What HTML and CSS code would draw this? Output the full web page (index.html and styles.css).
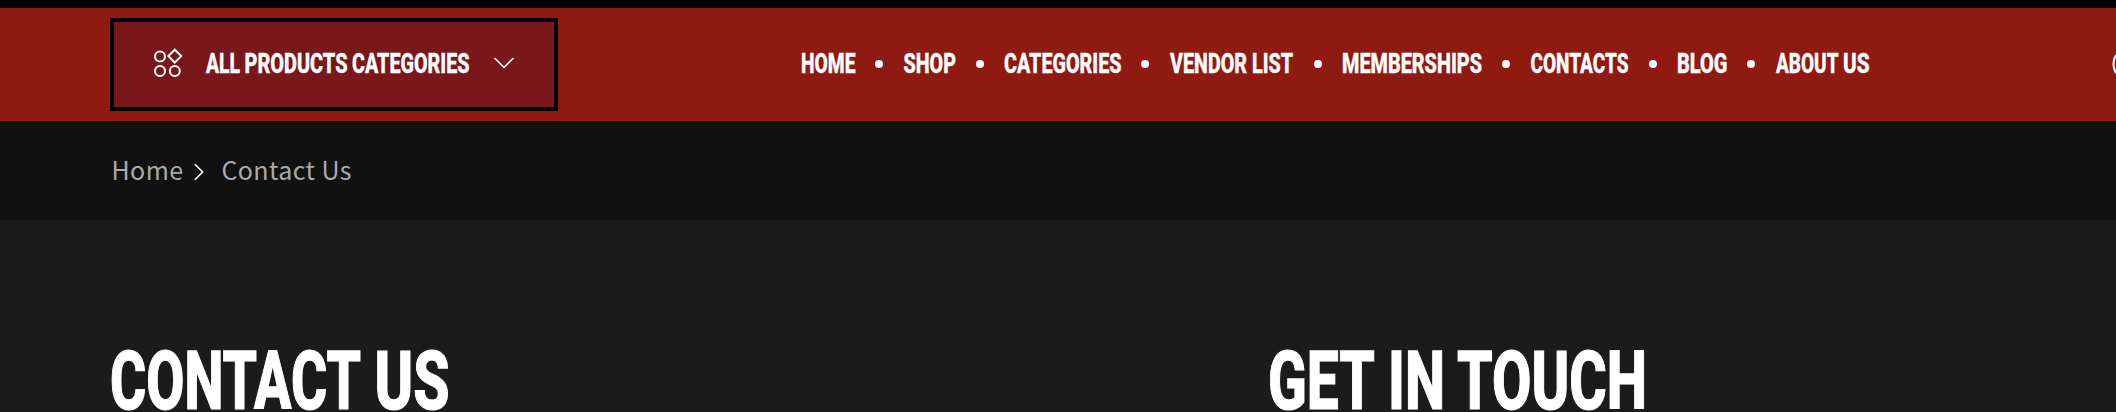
FILE: index.html
```
<!DOCTYPE html>
<html lang="en">
<head>
  <meta charset="UTF-8" />
  <meta name="viewport" content="width=device-width, initial-scale=1.0" />
  <title>Contact Us</title>
  <link rel="stylesheet" href="styles.css">
</head>
<body>
  <header class="navbar">
    <button class="categories-btn" type="button">
      <svg class="grid-icon" width="30" height="30" viewBox="0 0 30 30">
        <circle cx="7" cy="8.5" r="5" />
        <path d="M21.8 1.7l6.4 6.4-6.4 6.4-6.4-6.4z" />
        <circle cx="7" cy="23" r="5" />
        <circle cx="21.8" cy="23" r="5" />
      </svg>
      <svg class="label" width="264" height="36">
        <text x="0" y="28" textLength="34" lengthAdjust="spacingAndGlyphs">ALL</text>
        <text x="38.5" y="28" textLength="103" lengthAdjust="spacingAndGlyphs">PRODUCTS</text>
        <text x="146" y="28" textLength="117.5" lengthAdjust="spacingAndGlyphs">CATEGORIES</text>
      </svg>
      <svg class="chevron" width="22" height="12" viewBox="0 0 22 12"><path d="M1.5 1l9.5 9.3L20.5 1" /></svg>
    </button>
    <nav class="menu">
      <a href="#"><svg class="label" width="52.5" height="36"><text x="-1" y="28" textLength="54.5" lengthAdjust="spacingAndGlyphs">HOME</text></svg></a>
      <i class="dot"></i>
      <a href="#"><svg class="label" width="51" height="36"><text x="-.5" y="28" textLength="52.5" lengthAdjust="spacingAndGlyphs">SHOP</text></svg></a>
      <i class="dot"></i>
      <a href="#"><svg class="label" width="115" height="36"><text x="-1" y="28" textLength="117.5" lengthAdjust="spacingAndGlyphs">CATEGORIES</text></svg></a>
      <i class="dot"></i>
      <a href="#"><svg class="label" width="122.7" height="36"><text x="0" y="28" textLength="77" lengthAdjust="spacingAndGlyphs">VENDOR</text><text x="82" y="28" textLength="41" lengthAdjust="spacingAndGlyphs">LIST</text></svg></a>
      <i class="dot"></i>
      <a href="#"><svg class="label" width="138.3" height="36"><text x="-1" y="28" textLength="140" lengthAdjust="spacingAndGlyphs">MEMBERSHIPS</text></svg></a>
      <i class="dot"></i>
      <a href="#"><svg class="label" width="97" height="36"><text x="-.5" y="28" textLength="98" lengthAdjust="spacingAndGlyphs">CONTACTS</text></svg></a>
      <i class="dot"></i>
      <a href="#"><svg class="label" width="48" height="36"><text x="-1" y="28" textLength="50.5" lengthAdjust="spacingAndGlyphs">BLOG</text></svg></a>
      <i class="dot"></i>
      <a href="#"><svg class="label" width="95" height="36"><text x="0" y="28" textLength="62.5" lengthAdjust="spacingAndGlyphs">ABOUT</text><text x="67" y="28" textLength="26.5" lengthAdjust="spacingAndGlyphs">US</text></svg></a>
    </nav>
    <svg class="account" width="4" height="34" viewBox="0 0 4 34"><circle cx="17.5" cy="17" r="16" /></svg>
  </header>

  <div class="breadcrumb">
    <a href="#">Home</a>
    <svg class="arrow" width="10" height="18" viewBox="0 0 10 18"><path d="M1 1.2l7.6 7.8L1 16.8" /></svg>
    <span>Contact Us</span>
  </div>

  <main class="content">
    <h2>
      <svg class="title" width="345" height="100">
        <text x="-1" y="78.5" textLength="251" lengthAdjust="spacingAndGlyphs">CONTACT</text>
        <text x="263.5" y="78.5" textLength="75" lengthAdjust="spacingAndGlyphs">US</text>
      </svg>
    </h2>
    <h2>
      <svg class="title" width="384" height="100">
        <text x="-1" y="78.5" textLength="107" lengthAdjust="spacingAndGlyphs">GET</text>
        <text x="119" y="78.5" textLength="57" lengthAdjust="spacingAndGlyphs">IN</text>
        <text x="188" y="78.5" textLength="190" lengthAdjust="spacingAndGlyphs">TOUCH</text>
      </svg>
    </h2>
  </main>
</body>
</html>
```
FILE: styles.css
```
* { box-sizing: border-box; }
body {
  margin: 0;
  height: 412px;
  overflow: hidden;
  background: #1b1b1b;
  color: #fff;
  font-family: "Noto Sans CJK SC", "Open Sans", sans-serif;
}
svg { display: block; flex: none; overflow: visible; }
a { color: inherit; text-decoration: none; }

/* condensed display lettering */
.label text, .title text {
  font-family: Roboto, "Liberation Sans", sans-serif;
  font-weight: 800;
  fill: #fff;
  stroke: #fff;
}
.label text { font-size: 27.3px; stroke-width: 0.4px; }
.title text { font-size: 81.5px; stroke-width: 1.2px; }

.navbar {
  display: flex;
  align-items: flex-start;
  height: 121px;
  padding: 10px 0 0 110px;
  border-top: 8px solid #000;
  background: #8e1a12;
}
.categories-btn {
  display: flex;
  align-items: center;
  width: 448px;
  height: 93px;
  padding: 0 0 3px 39px;
  border: 4px solid #000;
  background: #79171a;
}
.grid-icon { fill: none; stroke: #fff; stroke-width: 2; }
.categories-btn .label { margin: 0 23px 0 23px; }
.chevron { fill: none; stroke: #fff; stroke-width: 1.6; }

.menu {
  display: flex;
  align-items: center;
  height: 36px;
  margin: 27px 0 0 243.5px;
}
.dot {
  width: 8px;
  height: 8px;
  margin: 1px 21px 0;
  border-radius: 50%;
  background: #fff;
}
.account { margin: 29px 0 0 auto; fill: none; stroke: #fff; stroke-width: 2; overflow: hidden; }

.breadcrumb {
  display: flex;
  align-items: center;
  height: 99px;
  padding: 0 0 4px 111.5px;
  background: #111;
  color: #aaa;
  font-size: 25px;
  letter-spacing: 0.4px;
}
.arrow { margin: 7px 17px 0 11px; fill: none; stroke: #fff; stroke-width: 1.6; }

.content {
  display: grid;
  grid-template-columns: 1158px 1fr;
  padding: 110px 0 0 111px;
}
.content h2 { margin: 0; }
```
